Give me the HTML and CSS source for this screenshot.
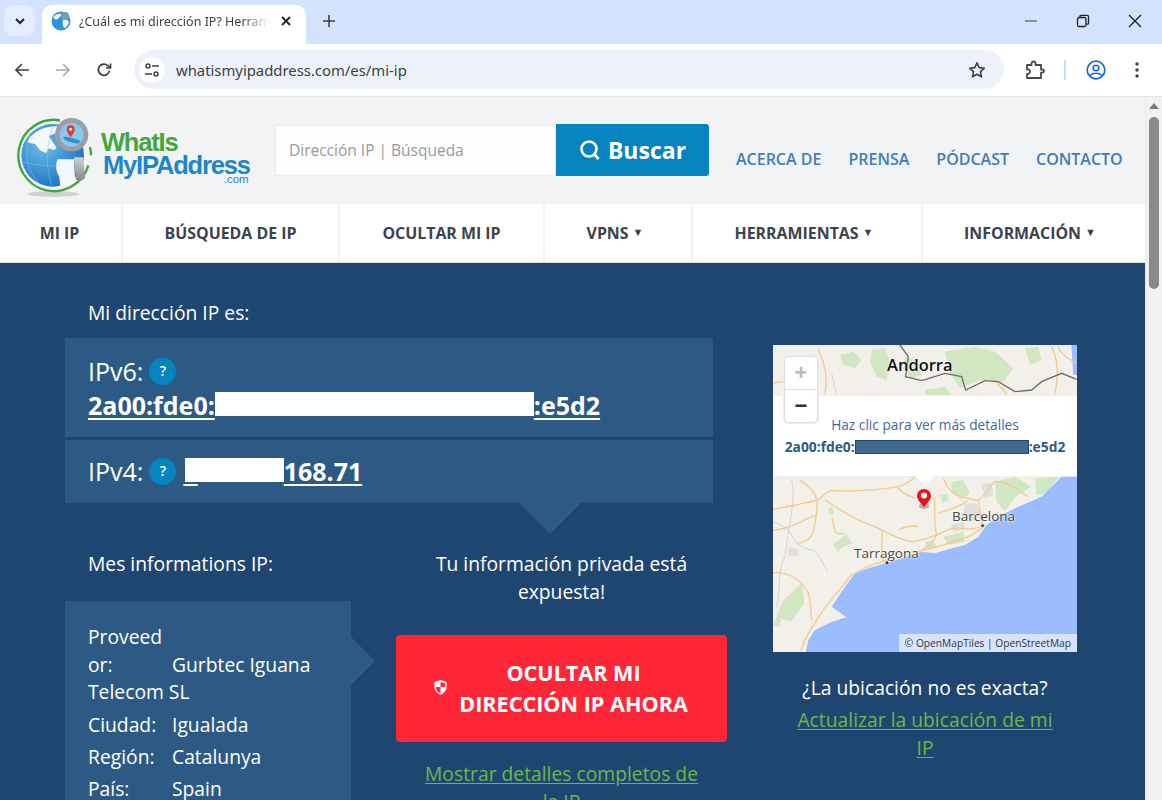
FILE: index.html
```html
<!DOCTYPE html>
<html lang="es">
<head>
<meta charset="utf-8">
<title>¿Cuál es mi dirección IP?</title>
<link rel="stylesheet" href="styles.css">
</head>
<body>
<div class="tabstrip">
  <div class="tabsearch"><svg viewBox="0 0 16 16" width="16" height="16"><path d="M4 6l4 4 4-4" fill="none" stroke="#1f2328" stroke-width="2"/></svg></div>
  <div class="tab">
    <svg class="favicon" viewBox="0 0 20 20" width="20" height="20"><circle cx="10" cy="10" r="9.500" fill="#2f94d6"/><path d="M2 6c3-3 6-4 8-3 1 2-2 3-3 5-1 1-3 1-5-2zM12 9c3-1 5 0 6 2-1 4-3 6-5 6-1-3-2-5-1-8z" fill="#eef5fa"/><circle cx="14" cy="5" r="4" fill="#8d949c"/><circle cx="14" cy="5" r="2.200" fill="#5aa7de"/></svg>
    <span class="tabtitle">¿Cuál es mi dirección IP? Herramientas</span>
    <svg class="tabclose" viewBox="0 0 12 12" width="12" height="12"><path d="M2 2l8 8M10 2l-8 8" stroke="#1f2328" stroke-width="1.800"/></svg>
  </div>
  <svg class="newtab" viewBox="0 0 14 14" width="14" height="14"><path d="M7 1v12M1 7h12" stroke="#3c4043" stroke-width="1.600"/></svg>
  <div class="wincontrols">
    <svg viewBox="0 0 14 14" width="14" height="14"><path d="M1 7h12" stroke="#5f6f85" stroke-width="1.400"/></svg>
    <svg viewBox="0 0 14 14" width="14" height="14"><rect x="1.500" y="3.500" width="8.500" height="9" rx="1.500" fill="none" stroke="#1f2328" stroke-width="1.300"/><path d="M4 3.200V2.500c0-.8.600-1.200 1.200-1.200h6c.8 0 1.300.6 1.300 1.300V9c0 .7-.5 1.200-1.200 1.200h-1" fill="none" stroke="#1f2328" stroke-width="1.300"/></svg>
    <svg viewBox="0 0 14 14" width="14" height="14"><path d="M1 1l12 12M13 1L1 13" stroke="#1f2328" stroke-width="1.400"/></svg>
  </div>
</div>
<div class="toolbar">
  <svg class="navicon first" viewBox="0 0 16 16" width="16" height="16"><path d="M15 8H2M8 2L2 8l6 6" fill="none" stroke="#3c4043" stroke-width="1.700"/></svg>
  <svg class="navicon" viewBox="0 0 16 16" width="16" height="16"><path d="M1 8h13M8 2l6 6-6 6" fill="none" stroke="#a5a9ae" stroke-width="1.500"/></svg>
  <svg class="navicon" viewBox="0 0 16 16" width="16" height="16"><path d="M13.500 8.500A5.600 5.600 0 1 1 12 3.800L14 6M14.500 1.500V6H10" fill="none" stroke="#3c4043" stroke-width="1.700"/></svg>
  <div class="omnibox">
    <span class="tune"><svg viewBox="0 0 16 16" width="16" height="16"><circle cx="4" cy="4" r="2" fill="none" stroke="#3c4043" stroke-width="1.500"/><path d="M8 4h7M1 12h7" stroke="#3c4043" stroke-width="1.700"/><circle cx="12" cy="12" r="2" fill="none" stroke="#3c4043" stroke-width="1.500"/></svg></span>
    <span class="url">whatismyipaddress.com/es/mi-ip</span>
    <svg class="star" viewBox="0 0 18 18" width="18" height="18"><path d="M9 1.800l2.200 4.800 5.100.6-3.800 3.500 1 5.100L9 13.200l-4.500 2.600 1-5.100-3.800-3.500 5.100-.6z" fill="none" stroke="#3c4043" stroke-width="1.600" stroke-linejoin="round"/></svg>
  </div>
  <svg class="ext" viewBox="0 0 20 20" width="20" height="20"><path d="M2 5h4.500V3.500a2 2 0 0 1 4 0V5H16v4.500h1.300a1.600 1.600 0 0 1 0 3.200H16V18H2v-4c2 .3 3-1 3-2.500S4 9 2 9.300z" fill="none" stroke="#474a4e" stroke-width="1.800" stroke-linejoin="round"/></svg>
  <span class="tooldiv"></span>
  <svg class="avatar" viewBox="0 0 20 20" width="20" height="20"><circle cx="10" cy="10" r="8.800" fill="none" stroke="#1a68d0" stroke-width="1.700"/><circle cx="10" cy="8" r="2.800" fill="none" stroke="#1a68d0" stroke-width="1.600"/><path d="M4 15.500c3-3 9-3 12 0" fill="none" stroke="#1a68d0" stroke-width="1.600"/></svg>
  <svg class="menu" viewBox="0 0 4 18" width="4" height="18"><circle cx="2" cy="3" r="1.700" fill="#3c4043"/><circle cx="2" cy="9" r="1.700" fill="#3c4043"/><circle cx="2" cy="15" r="1.700" fill="#3c4043"/></svg>
</div>
<div class="viewport">
  <div class="page">
    <header class="sitehead">
      <a class="logo">
        <svg class="logomark" viewBox="0 0 86 86" width="86" height="86">
          <defs>
            <radialGradient id="globeblue" cx="35%" cy="35%" r="75%"><stop offset="0" stop-color="#6dbcec"/><stop offset="1" stop-color="#1470ba"/></radialGradient>
            <linearGradient id="handlegray" x1="0" y1="0" x2="0" y2="1"><stop offset="0" stop-color="#cfd0d2"/><stop offset="1" stop-color="#85878a"/></linearGradient>
          </defs>
          <g transform="translate(-4 -5) scale(.3333)">
            <ellipse cx="130" cy="246" rx="78" ry="8" fill="#cfd0d1"/>
            <path d="M150 25A107 107 0 1 0 235 160M240 105c2 8 3 16 3 25" fill="none" stroke="#3ea83a" stroke-width="7"/>
            <circle cx="128" cy="130" r="94" fill="url(#globeblue)"/>
            <path d="M55 82C75 55 105 42 150 42l-12 22-22 8 24 35-8 8-16-6-8 14-18-8-14-18-24-6zM142 142h50l3 58c-12 12-28 20-44 24l-3-30c-10-14-12-34-6-52z" fill="#f3f8fc"/>
            <path d="M40 150c40 10 80 15 110 10M60 70c-20 50-10 110 30 145M130 40c-20 50-25 120-5 180" fill="none" stroke="#8cc6ec" stroke-width="1.500"/>
            <circle cx="185" cy="68" r="43" fill="#8ac8ee" stroke="#9b9ea2" stroke-width="14"/>
            <path d="M158 76c15-6 32 6 54 10l-6 9c-22-2-40-8-48-19z" fill="#2f8dd0"/>
            <path d="M192 136h28l5 62c-6 8-18 10-27 5z" fill="url(#handlegray)"/>
            <path d="M182 40a12 12 0 0 1 12 12c0 10-12 24-12 24s-12-14-12-24a12 12 0 0 1 12-12z" fill="#e23a35"/>
            <circle cx="182" cy="52" r="4.500" fill="#fff"/>
          </g>
        </svg>
        <span class="logotext">
          <span class="lt-what">WhatIs</span>
          <span class="lt-my">MyIPAddress</span>
          <span class="lt-com">.com</span>
        </span>
      </a>
      <form class="search">
        <div class="searchinput">Dirección IP | Búsqueda</div>
        <div class="searchbtn"><svg viewBox="0 0 22 22" width="22" height="22"><circle cx="10" cy="10" r="7.500" fill="none" stroke="#fff" stroke-width="2.600"/><path d="M15 15l4.500 5" stroke="#fff" stroke-width="2.800"/></svg>Buscar</div>
      </form>
      <nav class="toplinks">
        <a>ACERCA DE</a><a>PRENSA</a><a>PÓDCAST</a><a>CONTACTO</a>
      </nav>
    </header>
    <nav class="mainnav">
      <a class="mi">MI IP</a>
      <a>BÚSQUEDA DE IP</a>
      <a>OCULTAR MI IP</a>
      <a class="drop">VPNS <i>▼</i></a>
      <a class="drop">HERRAMIENTAS <i>▼</i></a>
      <a class="drop">INFORMACIÓN <i>▼</i></a>
    </nav>
    <main class="hero">
      <section class="leftcol">
        <h2 class="lead">Mi dirección IP es:</h2>
        <div class="ipbox">
          <div class="iprow v6">
            <div class="iplabel">IPv6: <span class="q">?</span></div>
            <a class="ipaddr">2a00:fde0:<span class="mask m6"></span>:e5d2</a>
          </div>
          <div class="iprow v4">
            <span class="iplabel">IPv4: <span class="q">?</span></span>
            <a class="ipaddr">1<span class="mask m4"></span>168.71</a>
          </div>
          <span class="arrowdown"></span>
        </div>
        <div class="lower">
          <div class="infocol">
            <h2 class="lead infohead">Mes informations IP:</h2>
            <div class="infobox">
              <span class="arrowright"></span>
              <p><b class="k">Proveed or:</b>Gurbtec Iguana Telecom SL</p>
              <p><b class="k">Ciudad:</b>Igualada</p>
              <p><b class="k">Región:</b>Catalunya</p>
              <p><b class="k">País:</b>Spain</p>
            </div>
          </div>
          <div class="actioncol">
            <p class="warn">Tu información privada está expuesta!</p>
            <a class="hidebtn">
              <svg viewBox="0 0 16 18" width="15" height="17"><path d="M8 1l6.500 2.200v5c0 4-2.800 7-6.500 8.500C4.300 15.200 1.500 12.200 1.500 8.200v-5z" fill="#fff"/><path d="M8 3v5.500H3c0 3 2 5.500 5 6.800V8.500h5V4.500z" fill="#ff2638"/></svg>
              <span>OCULTAR MI<br>DIRECCIÓN IP AHORA</span>
            </a>
            <a class="greenlink">Mostrar detalles completos de la IP</a>
          </div>
        </div>
      </section>
      <aside class="rightcol">
        <div class="map">
          <svg class="mapart" viewBox="0 0 304 307" width="304" height="307">
            <rect width="304" height="307" fill="#f3f0ea"/>
            <g transform="translate(-8 -5) scale(.3333)">
              <g fill="#d0e7c2">
                <path d="M225 45l40-10 25 25-20 25-35-10zM320 30l40-5 15 40-10 55-30-10-20-45zM420 50l40 15 10 40-30 10-25-30zM540 35l90-15 60 15 55 50-30 40-70-5-60 25-30-45zM780 25l40-5 10 40-35 15zM480 150l60-10 20 25-80 0zM560 425l35-5 20 40-25 20-30-25zM690 425l60-15 50 30-50 30-30 45-25-30zM810 415l70-5-30 50-35 5zM205 612l40-30 16 28-30 12-12 14zM190 505l12-5 6 20-14 4zM525 465l20-5 8 20-22 8zM480 605l25-5 8 20-30 5zM535 590l60-15 5 30-50 10zM55 780l55-50 8 60-40 55-45-15zM35 830l15 10-10 20-15-5z"/>
              </g>
              <g fill="#e1dfdb">
                <path d="M600 490l35 0 15 40-30 15-25-20zM650 430l30 0 5 35-25 10zM470 490l25 0-3 15-20 0zM555 555l40-8 8 20-35 8zM70 620l30 8 0 20-30 0z"/>
              </g>
              <path d="M890 410L830 470 760 500 700 530 665 555 640 590 600 615 560 625 510 640 470 635 410 655 360 670 310 685 270 700 240 740 200 800 235 825 245 832 200 845 150 870 130 900 120 950H950V410zM918 0h32v105h-25z" fill="#9dbcfd"/>
              <g fill="none" stroke="#f5c98c" stroke-width="4" stroke-linejoin="round">
                <path d="M0 510C60 505 110 490 160 480 175 470 178 455 200 452 260 455 340 450 400 440 430 435 440 415 460 405"/>
                <path d="M180 480C210 500 240 520 280 540 320 555 340 565 360 575 390 590 420 605 445 605 480 600 500 590 515 585 540 575 560 560 590 565 620 570 640 565 655 555"/>
                <path d="M508 470C512 510 505 550 515 585 505 610 485 620 470 632"/>
                <path d="M105 420C130 440 150 450 155 480 160 510 150 550 145 575 135 600 120 605 100 610"/>
                <path d="M0 575C50 570 80 560 110 545 125 535 140 530 155 525"/>
                <path d="M350 570C355 600 345 630 355 665"/>
                <path d="M262 705C300 680 330 670 365 662 400 650 440 640 470 632 520 620 570 605 610 590 640 575 650 565 660 555"/>
                <path d="M262 700C240 730 215 760 190 790 165 820 150 850 130 880 120 900 112 915 108 935"/>
                <path d="M535 415C545 440 560 465 590 470 610 475 625 480 640 480 660 470 670 440 690 425 720 420 750 445 790 470"/>
                <path d="M640 480C645 510 650 535 650 558"/>
                <path d="M0 700C70 690 110 720 130 760 140 790 135 810 140 840"/>
                <path d="M395 440C420 470 450 480 490 470M520 520C550 510 590 500 610 480"/>
                <path d="M400 570C420 560 440 555 460 560M200 530C210 560 200 590 240 580"/>
                <path d="M860 20C875 50 885 90 870 160M880 20C890 50 920 60 935 70"/>
                <path d="M25 130C50 120 75 125 100 145M160 30C180 70 190 110 180 160M680 110C700 140 720 150 725 165"/>
              </g>
              <path d="M25 545C50 555 70 565 80 585 90 610 110 625 140 630 165 640 170 670 190 695" fill="none" stroke="#a9c8f5" stroke-width="2"/>
              <path d="M80 420C95 470 70 560 60 650 35 690 50 740 35 800M200 100L215 165" fill="none" stroke="#cfcdc8" stroke-width="2.500"/>
              <path d="M405 15L430 50 422 110 470 122 540 100 590 110 602 150 660 122 700 125 750 155 800 150 830 125 890 100 935 118" fill="none" stroke="#6d6d6d" stroke-width="4"/>
              <circle cx="653" cy="557" r="4" fill="#333"/><circle cx="366" cy="668" r="4" fill="#333"/>
            </g>
          </svg>
          <span class="city andorra">Andorra</span>
          <span class="city barcelona">Barcelona</span>
          <span class="city tarragona">Tarragona</span>
          <div class="popup">
            <span class="popline">Haz clic para ver más detalles</span>
            <strong class="popip">2a00:fde0:<span class="popmask"></span>:e5d2</strong>
            <span class="poptip"></span>
          </div>
          <div class="zoomctl"><span class="zin">+</span><span class="zout">−</span></div>
          <svg class="pin" viewBox="0 0 16 22" width="16" height="22"><ellipse cx="8" cy="18" rx="5" ry="3" fill="#b3b0aa"/><path d="M8 1a7 7 0 0 1 7 7c0 4-7 11-7 11S1 12 1 8a7 7 0 0 1 7-7z" fill="#e9121f"/><circle cx="8" cy="7.500" r="3" fill="#fff"/></svg>
          <span class="attrib">© OpenMapTiles | OpenStreetMap</span>
        </div>
        <p class="notexact">¿La ubicación no es exacta?</p>
        <a class="greenlink update">Actualizar la ubicación de mi IP</a>
      </aside>
    </main>
  </div>
  <div class="scrollbar">
    <svg viewBox="0 0 12 8" width="12" height="8"><path d="M6 1l5 6H1z" fill="#7a7a7a"/></svg>
    <span class="thumb"></span>
  </div>
</div>
</body>
</html>
```
FILE: styles.css
```css
* { box-sizing: border-box; }
html, body { margin: 0; padding: 0; height: 800px; overflow: hidden; }
body { font-family: "Open Sans", "Liberation Sans", sans-serif; background: #fff; width: 1162px; }
p, h2 { margin: 0; font-weight: 400; }
a { color: inherit; }

/* browser chrome */
.tabstrip { height: 44px; background: #d3e3fd; display: flex; align-items: flex-end; position: relative; }
.tabsearch { width: 31px; height: 31px; margin: 0 7px 8px 4px; background: #e4edfd; border-radius: 9px; display: flex; align-items: center; justify-content: center; }
.tab { width: 264px; height: 39px; background: #fff; border-radius: 10px 10px 0 0; display: flex; align-items: center; padding: 0 0 7px 9px; font: 12.500px "Noto Sans", "Open Sans", sans-serif; color: #3c4043; }
.favicon { flex: none; }
.tabtitle { width: 190px; margin-left: 8px; white-space: nowrap; overflow: hidden; -webkit-mask-image: linear-gradient(90deg, #000 86%, transparent); mask-image: linear-gradient(90deg, #000 86%, transparent); flex: none; }
.tabclose { margin-left: 11px; flex: none; }
.newtab { margin: 0 0 16px 16px; }
.wincontrols { margin: 0 20px 16px auto; display: flex; gap: 38px; }
.toolbar { height: 53px; background: #fff; border-bottom: 1px solid #e3e4e6; display: flex; align-items: center; padding-bottom: 1px; }
.navicon { margin-left: 25px; flex: none; }
.navicon.first { margin-left: 14px; }
.omnibox { width: 870px; height: 39px; margin-left: 22px; border-radius: 20px; background: #edf2fa; display: flex; align-items: center; padding-left: 5px; }
.tune { width: 26px; height: 26px; background: #fff; border-radius: 50%; display: flex; align-items: center; justify-content: center; flex: none; }
.url { margin-left: 11px; font: 14.850px "Noto Sans", "Open Sans", sans-serif; color: #3c4043; }
.star { margin-left: auto; margin-right: 18px; }
.ext { margin-left: 21px; flex: none; }
.tooldiv { width: 2px; height: 20px; background: #c9dcf7; margin-left: 19px; flex: none; }
.avatar { margin-left: 20px; flex: none; }
.menu { margin-left: 29px; flex: none; }

/* viewport */
.viewport { display: flex; height: 703px; overflow: hidden; }
.page { width: 1146px; flex: none; background: #f1f3f5; border-right: 1px solid #e8e8e8; }
.scrollbar { width: 16px; background: #f1f1f1; display: flex; flex-direction: column; align-items: center; padding-top: 5px; gap: 7px; }
.thumb { width: 10px; height: 172px; background: #8a8a8a; border-radius: 5px; }

/* site header */
.sitehead { height: 107px; display: flex; align-items: flex-start; position: relative; }
.logo { display: flex; margin: 20px 0 0 14px; width: 261px; }
.logomark { flex: none; }
.logotext { display: block; position: relative; margin: 14px 0 0 1px; font-family: "Liberation Sans", Arial, sans-serif; font-weight: 700; }
.lt-what { display: block; font-size: 25.500px; line-height: 23px; color: #45a63d; letter-spacing: -1.200px; }
.lt-my { display: block; font-size: 25.500px; line-height: 22px; color: #1f85c9; letter-spacing: -1.180px; margin-left: 2px; white-space: nowrap; }
.lt-com { display: block; position: absolute; top: 42px; right: 1px; font-size: 11.500px; font-weight: 400; color: #1f85c9; }
.search { display: flex; margin-top: 27px; }
.searchinput { width: 281px; height: 51px; margin-top: 1px; background: #fdfdfd; border: 1px solid #ececec; padding-left: 13px; font-size: 15.500px; line-height: 49px; color: #9a9a9a; }
.searchbtn { width: 153px; height: 52px; background: #0584bf; border-radius: 0 3px 3px 0; color: #fff; font-size: 23px; font-weight: 700; display: flex; align-items: center; justify-content: center; gap: 7px; }
.toplinks { display: flex; gap: 27px; margin: 51px 0 0 27px; font-size: 16px; font-weight: 600; color: #3f7fb5; white-space: nowrap; line-height: 22px; }

/* main nav */
.mainnav { display: grid; grid-template-columns: 123px 217px 205px 148px 230px 222px; height: 59px; background: #fff; border-bottom: 1px solid #dfe3e6; }
.mainnav a { display: flex; align-items: center; justify-content: center; gap: 4px; font-size: 15.900px; font-weight: 700; color: #3b4250; border-right: 2px solid #f1f3f5; padding-bottom: 1px; white-space: nowrap; }
.mainnav a.mi { padding-right: 2px; }
.mainnav a.drop { padding-right: 6px; }
.mainnav a:last-child { border-right: 0; padding-right: 8px; }
.mainnav i { font-style: normal; font-size: 11px; position: relative; top: -1px; }

/* hero */
.hero { background: #1f4670; height: 537px; display: flex; padding-left: 65px; color: #fff; overflow: hidden; }
.leftcol { width: 662px; flex: none; }
.lead { font-size: 19.300px; line-height: 26px; padding: 37px 0 0 23px; }
.ipbox { width: 648px; margin-top: 12px; position: relative; }
.iprow { background: #2d5a84; padding-left: 23px; }
.iprow.v6 { height: 99px; padding-top: 16px; margin-bottom: 3px; }
.iprow.v4 { height: 63px; display: flex; align-items: center; gap: 7px; padding-bottom: 1px; }
.iplabel { font-size: 25px; line-height: 34px; display: flex; align-items: center; gap: 6px; height: 34px; }
.q { width: 27px; height: 27px; border-radius: 50%; background: #0584bf; font-size: 14px; font-weight: 600; display: inline-flex; align-items: center; justify-content: center; }
.ipaddr { font-size: 25px; font-weight: 700; text-decoration: underline; text-underline-offset: 3px; text-decoration-thickness: 2px; line-height: 34px; display: inline-block; white-space: nowrap; }
.mask { display: inline-block; background: #fff; height: 24px; vertical-align: -1px; }
.m6 { width: 319px; }
.m4 { width: 99px; margin-left: -13px; }
.arrowdown { position: absolute; left: 454px; top: 165px; width: 0; height: 0; border: 31px solid transparent; border-top-color: #2d5a84; border-bottom: 0; }
.lower { display: flex; }
.infocol { width: 286px; flex: none; }
.infohead { padding-top: 48px; }
.infobox { position: relative; background: #2d5a84; margin-top: 24px; padding: 22px 20px 20px 23px; font-size: 19.300px; line-height: 27.500px; height: 220px; }
.infobox p { margin-bottom: 4.500px; }
.infobox p:first-of-type { margin-bottom: 5.500px; }
.k { display: inline-block; width: 84px; font-weight: 400; }
.arrowright { position: absolute; left: 286px; top: 36px; width: 0; height: 0; border: 24px solid transparent; border-left-color: #2d5a84; border-right: 0; }
.actioncol { width: 331px; margin-left: 45px; flex: none; text-align: center; }
.warn { font-size: 19.300px; line-height: 28px; padding: 47px 20px 0; }
.hidebtn { margin-top: 29px; height: 107px; background: #ff2638; border-radius: 4px; display: flex; align-items: center; justify-content: center; gap: 11px; font-size: 21.600px; font-weight: 700; line-height: 31px; padding: 0 2px 2px 0; }
.hidebtn svg { flex: none; }
.greenlink { display: block; color: #6cb848; font-size: 19.300px; line-height: 28px; text-decoration: underline; text-underline-offset: 2px; }
.actioncol .greenlink { margin-top: 18px; padding: 0 20px; }

/* map */
.rightcol { width: 304px; margin-left: 46px; flex: none; text-align: center; padding-top: 82px; }
.map { position: relative; width: 304px; height: 307px; overflow: hidden; background: #f3f0ea; text-align: left; }
.mapart { display: block; }
.city { position: absolute; font-size: 13.500px; line-height: 16px; color: #444; text-shadow: 0 0 2px #fff, 0 0 2px #fff; white-space: nowrap; }
.andorra { left: 114px; top: 12px; font-size: 16.500px; font-weight: 600; color: #111; }
.barcelona { left: 179px; top: 163px; }
.tarragona { left: 81px; top: 200px; }
.popup { position: absolute; left: 0; top: 51px; width: 304px; height: 80px; background: #fff; text-align: center; color: #1f4670; }
.popline { display: block; margin-top: 20px; font-size: 13.700px; line-height: 18px; color: #3f6a94; }
.popip { display: block; margin-top: 4px; font-size: 13.800px; line-height: 18px; color: #2d5a84; font-weight: 700; white-space: nowrap; }
.popmask { display: inline-block; width: 174px; height: 14px; background: #426a91; border: 1px solid #1f4670; vertical-align: -2px; }
.poptip { position: absolute; left: 142px; top: 80px; border: 10px solid transparent; border-top-color: #fff; border-bottom: 0; width: 0; height: 0; }
.zoomctl { position: absolute; left: 11px; top: 11px; width: 34px; height: 67px; background: #fff; border: 1px solid #dedede; border-radius: 4px; display: flex; flex-direction: column; color: #bbb; box-shadow: 0 0 0 1px #eee; }
.zin, .zout { flex: 1; text-align: center; font: 700 22px/32px "Liberation Sans", Arial, sans-serif; }
.zin { border-bottom: 1px solid #ddd; }
.zout { color: #333; }
.pin { position: absolute; left: 143px; top: 143px; }
.attrib { position: absolute; right: 0; bottom: 0; height: 18px; padding: 0 6px; background: rgba(255,255,255,.6); font-size: 10.200px; line-height: 18px; color: #333; white-space: nowrap; }
.notexact { font-size: 19.300px; line-height: 28px; margin-top: 22px; }
.greenlink.update { margin-top: 4px; padding: 0 20px; }
```
